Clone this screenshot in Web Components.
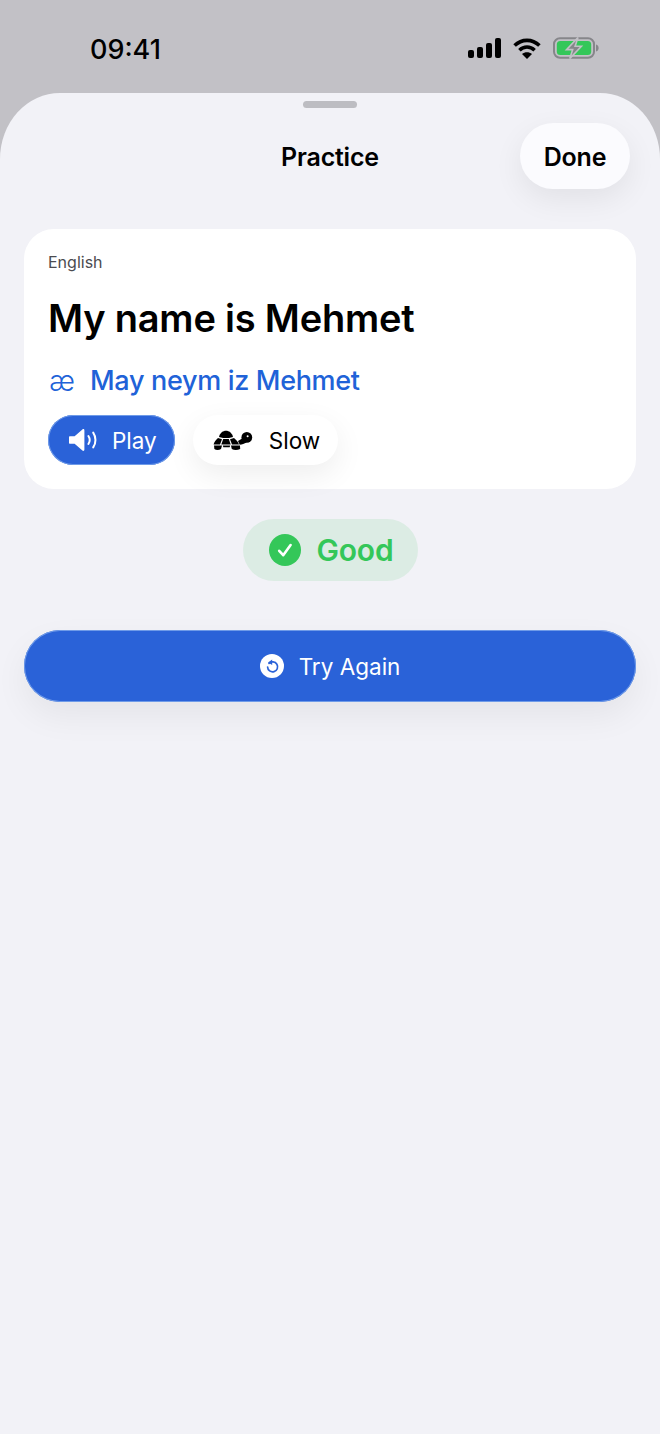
<!DOCTYPE html>
<html>
<head>
<meta charset="utf-8">
<title>Practice</title>
<style>
    html, body { margin: 0; height: 100%; }
    body {
        background: #c2c1c6;
        font-family: Inter, "Liberation Sans", sans-serif;
        color: #000;
    }
    practice-screen { height: 1434px; }
</style>
</head>
<body>
<practice-screen>
    <status-bar slot="status" time="09:41"></status-bar>
    <sheet-header title="Practice" action="Done"></sheet-header>
    <phrase-card language="English" phrase="My name is Mehmet" phonetic="May neym iz Mehmet">
        <pill-button kind="primary" label="Play" icon="speaker"></pill-button>
        <pill-button kind="plain" label="Slow" icon="turtle"></pill-button>
    </phrase-card>
    <score-badge label="Good"></score-badge>
    <retry-button label="Try Again"></retry-button>
</practice-screen>

<script>
class PracticeScreen extends HTMLElement {
    constructor() {
        super();
        this.attachShadow({ mode: 'open' });
        this.shadowRoot.innerHTML = `
            <style>
                :host { display: flex; flex-direction: column; }
                .status { height: 93px; flex: none; }
                .sheet {
                    flex: 1;
                    background: #f2f2f7;
                    border-radius: 60px 60px 0 0 / 66px 66px 0 0;
                    position: relative;
                    display: flex;
                    flex-direction: column;
                    padding: 0 24px;
                }
                .grabber {
                    position: absolute;
                    top: 8px;
                    left: 50%;
                    width: 54px;
                    height: 7px;
                    margin-left: -27px;
                    border-radius: 4px;
                    background: #bdbdc2;
                }
            </style>
            <div class="status"><slot name="status"></slot></div>
            <div class="sheet">
                <div class="grabber"></div>
                <slot></slot>
            </div>
        `;
    }
}

class StatusBar extends HTMLElement {
    constructor() {
        super();
        this.attachShadow({ mode: 'open' });
        this.shadowRoot.innerHTML = `
            <style>
                :host { display: flex; justify-content: space-between; align-items: center; height: 93px; padding: 6px 61px 0 90px; box-sizing: border-box; }
                .time { font-size: 27px; font-weight: 550; color: #000; line-height: 32px; margin-top: 1px; }
                .icons { display: flex; align-items: center; gap: 11px; margin-top: -3px; }
                svg { display: block; }
            </style>
            <span class="time">${this.getAttribute('time')}</span>
            <div class="icons">
                <svg width="34" height="20" viewBox="0 0 34 20">
                    <rect x="0" y="12" width="6" height="8" rx="2"/>
                    <rect x="9" y="9" width="6" height="11" rx="2"/>
                    <rect x="18" y="5" width="6" height="15" rx="2"/>
                    <rect x="27" y="0" width="6" height="20" rx="2"/>
                </svg>
                <svg width="28" height="21" viewBox="0 0 28 21" fill="none" stroke="#000" stroke-width="3.6">
                    <path d="M1.6 7.6C8.6 .6 19.4 .6 26.4 7.6"/>
                    <path d="M6.4 12.2C10.8 8 17.2 8 21.6 12.2"/>
                    <path d="M14 21l-5-5c2.8-2.4 7.2-2.4 10 0z" fill="#000" stroke="none"/>
                </svg>
                <svg width="46" height="22" viewBox="0 0 46 22" style="margin-left:1px">
                    <rect x="1" y="1.2" width="40" height="19.6" rx="6" fill="none" stroke="#86868a" stroke-width="2"/>
                    <rect x="3.8" y="4" width="34.4" height="14" rx="3.5" fill="#34c759"/>
                    <path d="M43 7.5c1.8.5 2.6 1.9 2.6 3.5s-.8 3-2.6 3.5z" fill="#86868a"/>
                    <path d="M25 0.5L13.5 12.6h6.2L16.8 21.5 28.4 9.2h-6.3z" fill="#86868a" stroke="#c2c1c6" stroke-width="1.6"/>
                </svg>
            </div>
        `;
    }
}

class SheetHeader extends HTMLElement {
    constructor() {
        super();
        this.attachShadow({ mode: 'open' });
        this.shadowRoot.innerHTML = `
            <style>
                :host { display: grid; grid-template-columns: 1fr auto 1fr; align-items: center; padding: 30px 6px 0; margin-bottom: 40px; }
                .title { grid-column: 2; font-size: 25px; font-weight: 600; line-height: 30px; letter-spacing: -0.2px; padding-top: 2px; }
                .action {
                    grid-column: 3;
                    justify-self: end;
                    width: 110px;
                    height: 66px;
                    box-sizing: border-box;
                    padding-top: 2px;
                    border-radius: 33px;
                    display: flex;
                    align-items: center;
                    justify-content: center;
                    background: #fbfbfe;
                    font-size: 25px;
                    font-weight: 600;
                    letter-spacing: -0.2px;
                    box-shadow: 0 10px 30px rgba(0, 0, 0, 0.07);
                }
            </style>
            <span class="title">${this.getAttribute('title')}</span>
            <span class="action">${this.getAttribute('action')}</span>
        `;
    }
}

class PhraseCard extends HTMLElement {
    constructor() {
        super();
        this.attachShadow({ mode: 'open' });
        this.shadowRoot.innerHTML = `
            <style>
                :host { display: block; background: #fff; border-radius: 30px; height: 260px; box-sizing: border-box; padding: 24px 24px 0; }
                .lang { font-size: 16px; line-height: 18px; color: #4b4b50; }
                .phrase { font-size: 38px; font-weight: 600; line-height: 46px; letter-spacing: -0.2px; margin-top: 24px; }
                .phonetic { display: flex; align-items: center; gap: 14px; color: #2062d8; margin-top: 23px; height: 34px; }
                .ae { font-size: 28px; font-weight: 300; width: 28px; line-height: 34px; text-align: center; }
                .text { font-size: 27px; font-weight: 500; line-height: 34px; letter-spacing: -0.32px; }
                .actions { display: flex; gap: 18px; margin-top: 17px; }
            </style>
            <div class="lang">${this.getAttribute('language')}</div>
            <div class="phrase">${this.getAttribute('phrase')}</div>
            <div class="phonetic"><span class="ae">æ</span><span class="text">${this.getAttribute('phonetic')}</span></div>
            <div class="actions"><slot></slot></div>
        `;
    }
}

const pillIcons = {
    speaker: `<svg width="30" height="24" viewBox="0 0 30 24" fill="#fff">
        <path d="M1 8.2h4.6L13.4 1.4c.9-.8 2-.2 2 1v19.2c0 1.2-1.1 1.8-2 1L5.6 15.8H1c-.6 0-1-.4-1-1V9.2c0-.6.4-1 1-1z"/>
        <path d="M19.4 8c1.6 2.4 1.6 5.6 0 8" fill="none" stroke="#fff" stroke-width="2" stroke-linecap="round"/>
        <path d="M24.2 4.6c3 4.4 3 10.4 0 14.8" fill="none" stroke="#fff" stroke-width="2" stroke-linecap="round"/>
    </svg>`,
    turtle: `<svg width="40" height="21" viewBox="0 0 40 21">
        <path d="M6 7C8-1.200 18-1.200 20 7L16 8H10z"/>
        <path d="M5 8l4 1.200-2 5.300H.6C1 12 3 10 5 8z"/>
        <path d="M10.200 9h5.600l1.900 5.500H8.300z"/>
        <path d="M21 8l-4 1.200 2 5.300h7C25.500 12 23 10 21 8z"/>
        <path d="M1 15.600h8l-1 3.400c-2 1.400-5 1.400-6.600 0z"/>
        <path d="M9.800 15.600h7.400l-.5 1.600H10.300z"/>
        <path d="M18 15.600h9l.2 3.400c-2.800 1.400-6.200 1.400-8.400 0z"/>
        <path d="M25 11l5-3 3.500 4.600c-2 1.300-4.500 2-6.800 2.200z"/>
        <circle cx="33.800" cy="7.400" r="5.400"/>
        <circle cx="34.600" cy="6.200" r="1" fill="#fff"/>
    </svg>`
};

class PillButton extends HTMLElement {
    constructor() {
        super();
        this.attachShadow({ mode: 'open' });
        const primary = this.getAttribute('kind') === 'primary';
        this.shadowRoot.innerHTML = `
            <style>
                :host {
                    display: inline-flex;
                    align-items: center;
                    height: 50px;
                    border-radius: 25px;
                    box-sizing: border-box;
                    font-size: 22.5px;
                    font-weight: 400;
                    background: ${primary ? '#2a62d8' : '#fff'};
                    color: ${primary ? '#fff' : '#000'};
                    gap: ${primary ? '13' : '16'}px;
                    padding: ${primary ? '0 18px 0 21px' : '0 18px 0 20px'};
                    box-shadow: ${primary ? 'inset 0 0 0 1px #6f9be8' : '0 10px 30px rgba(0, 0, 0, 0.07)'};
                }
                svg { display: block; }
            </style>
            ${pillIcons[this.getAttribute('icon')]}
            <span>${this.getAttribute('label')}</span>
        `;
    }
}

class ScoreBadge extends HTMLElement {
    constructor() {
        super();
        this.attachShadow({ mode: 'open' });
        this.shadowRoot.innerHTML = `
            <style>
                :host {
                    display: flex;
                    align-items: center;
                    align-self: center;
                    gap: 16px;
                    height: 62px;
                    width: 175px;
                    box-sizing: border-box;
                    padding-left: 26px;
                    border-radius: 31px;
                    margin-top: 30px;
                    background: #dcece4;
                    color: #34c759;
                    font-size: 30px;
                    font-weight: 600;
                    letter-spacing: -0.2px;
                }
                svg { display: block; }
            </style>
            <svg width="32" height="32" viewBox="0 0 32 32">
                <circle cx="16" cy="16" r="16" fill="#34c759"/>
                <path d="M10.200 16.800l4 4.400 7.400-10.200" fill="none" stroke="#fff" stroke-width="2.600" stroke-linecap="round" stroke-linejoin="round"/>
            </svg>
            <span>${this.getAttribute('label')}</span>
        `;
    }
}

class RetryButton extends HTMLElement {
    constructor() {
        super();
        this.attachShadow({ mode: 'open' });
        this.shadowRoot.innerHTML = `
            <style>
                :host {
                    display: flex;
                    align-items: center;
                    justify-content: center;
                    gap: 15px;
                    height: 72px;
                    border-radius: 36px;
                    margin-top: 49px;
                    background: #2a62d8;
                    color: #fff;
                    font-size: 22.5px;
                    font-weight: 400;
                    box-shadow: inset 0 0 0 1px #6f9be8, 0 14px 34px rgba(0, 0, 0, 0.06);
                }
                svg { display: block; }
            </style>
            <svg width="24" height="24" viewBox="0 0 24 24">
                <circle cx="12" cy="12" r="12" fill="#fff"/>
                <path d="M9 9.400a5 5 0 1 1-1.400 3.600" fill="none" stroke="#2a62d8" stroke-width="1.700" stroke-linecap="round"/>
                <path d="M12.200 5.600v5.400L8 8.400z" fill="#2a62d8"/>
            </svg>
            <span>${this.getAttribute('label')}</span>
        `;
    }
}

customElements.define('practice-screen', PracticeScreen);
customElements.define('status-bar', StatusBar);
customElements.define('sheet-header', SheetHeader);
customElements.define('phrase-card', PhraseCard);
customElements.define('pill-button', PillButton);
customElements.define('score-badge', ScoreBadge);
customElements.define('retry-button', RetryButton);
</script>
</body>
</html>
